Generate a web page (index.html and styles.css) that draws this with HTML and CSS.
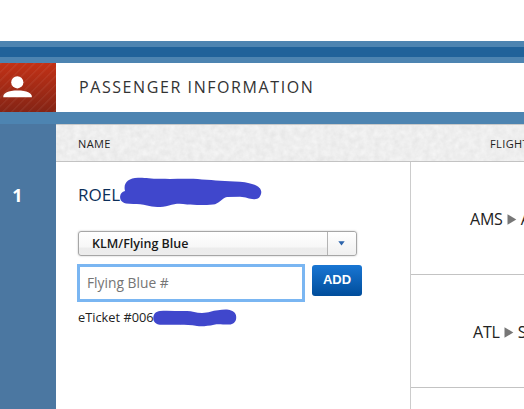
FILE: index.html
```html
<!DOCTYPE html>
<html lang="en">
<head>
    <meta charset="UTF-8">
    <meta name="viewport" content="width=device-width, initial-scale=1.0">
    <title>Passenger Information</title>
    <link rel="stylesheet" href="styles.css">
</head>
<body>
    <div class="top-bar"></div>

    <div class="section-header">
        <div class="section-icon">
            <svg width="30" height="22" viewBox="0 0 30 22">
                <circle cx="14.3" cy="6.3" r="6.1" fill="#fff"/>
                <path d="M0.2 21.2C0.2 17 5 14.6 14.5 14.6S28.9 17 28.9 21.2Z" fill="#fff"/>
            </svg>
        </div>
        <h1>PASSENGER INFORMATION</h1>
    </div>

    <div class="passenger">
        <div class="number">1</div>
        <div class="details">
            <div class="column-titles">
                <!-- paper texture -->
                <svg class="paper" width="468" height="36">
                    <filter id="grain" x="0" y="0" width="100%" height="100%" color-interpolation-filters="sRGB">
                        <feTurbulence type="fractalNoise" baseFrequency="0.16" numOctaves="3" seed="4"/>
                        <feColorMatrix values="0.075 0 0 0 0.895  0.075 0 0 0 0.895  0.075 0 0 0 0.895  0 0 0 0 1"/>
                    </filter>
                    <rect width="468" height="36" filter="url(#grain)"/>
                </svg>
                <span class="title-name">NAME</span>
                <span class="title-flight">FLIGHT</span>
            </div>
            <div class="columns">
                <div class="info">
                    <div class="name">
                        <span>ROEL</span>
                        <svg class="mark mark-name" width="142" height="31" viewBox="0 0 142 31">
                            <path d="M5 14C3 6 8 1 18 .7C25 .4 30 1.8 40 1.8C55 2.3 67 1.3 82 2.4C95 3 105 4.3 120 4.7C133 6 141 9 141.3 15C141 20 138 22.5 134 22.2C129 22 126 20 120 19.7L107 19.9C102 21 99 27 93 27.5C84 28.3 74 28 67 27.5C60 26 55 26.6 49 28.4C41 30.5 33 30.3 27 28.5C20 26 12 27.5 6 26.6C1 25.5 0 22 .1 19.5C.4 16.5 2 14.7 5 14Z"/>
                        </svg>
                    </div>
                    <div class="select">
                        <span class="select-text">KLM/Flying Blue</span>
                        <span class="select-arrow">
                            <svg width="7" height="5" viewBox="0 0 7 5"><path d="M0.3 0.3H6.7L3.5 4.6Z" fill="#2d64ab"/></svg>
                        </span>
                    </div>
                    <div class="add-row">
                        <input type="text" class="number-input" placeholder="Flying Blue #">
                        <button class="add">ADD</button>
                    </div>
                    <div class="ticket">
                        <span>eTicket #006</span>
                        <svg class="mark mark-ticket" width="84" height="18" viewBox="0 0 84 18">
                            <path d="M7 2C16 1.4 26 2.4 34 2C39 2 43 4 49 4C56 4 59 1.5 65 1.3C70 .5 75 .2 78 1.5C82 3 83.5 5.5 83.2 9C83 13 80 15.7 76 15.6C70 15.8 66 14.6 61 15.7C55 17 49 17.6 44 17C38 15.6 32 16 27 15.7H7C2.5 15.3 .2 12.5 .3 9C.4 5 3 2.3 7 2Z"/>
                        </svg>
                    </div>
                </div>
                <div class="flights">
                    <div class="flight flight-first">
                        <span>AMS</span>
                        <svg width="10" height="11" viewBox="0 0 10 11"><path d="M0.5 0.3L9.3 5.5L0.5 10.7Z" fill="#777"/></svg>
                        <span>ATL</span>
                    </div>
                    <div class="flight">
                        <span>ATL</span>
                        <svg width="10" height="11" viewBox="0 0 10 11"><path d="M0.5 0.3L9.3 5.5L0.5 10.7Z" fill="#777"/></svg>
                        <span>SEA</span>
                    </div>
                </div>
            </div>
        </div>
    </div>
</body>
</html>
```
FILE: styles.css
```css
* {
    box-sizing: border-box;
}
body {
    margin: 0;
    padding-top: 41px;
    height: 409px;
    overflow: hidden;
    background-color: #ffffff;
    color: #222;
    font-family: "Open Sans", "Liberation Sans", sans-serif;
}
.top-bar {
    height: 22px;
    background-color: #20629a;
    border-top: 6px solid #4d84b1;
    border-bottom: 6px solid #4d84b1;
}
.section-header {
    display: flex;
    height: 61px;
    border-bottom: 12px solid #4d84b1;
}
.section-icon {
    width: 56px;
    padding: 13px 0 0 3px;
    background: repeating-linear-gradient(135deg, rgba(255, 255, 255, 0.05) 0 1px, transparent 2px 6px), linear-gradient(#c23116, #842415);
}
.section-icon svg {
    display: block;
}
h1 {
    margin: 0 0 0 23px;
    font-size: 16px;
    font-weight: 500;
    line-height: 49px;
    letter-spacing: 1.58px;
    color: #333;
}
.passenger {
    display: flex;
    height: 285px;
}
.number {
    width: 56px;
    padding: 58px 21px 0 0;
    background-color: #4b77a1;
    color: #fff;
    font-size: 18px;
    font-weight: 700;
    line-height: 26px;
    text-align: center;
}
.details {
    width: 468px;
}
.column-titles {
    position: relative;
    display: flex;
    height: 38px;
    border-top: 1px solid #c9c9c9;
    border-bottom: 1px solid #c3c3c3;
    font-size: 11px;
    font-weight: 500;
    line-height: 37px;
    overflow: hidden;
}
.paper {
    position: absolute;
    top: 0;
    left: 0;
}
.title-name,
.title-flight {
    position: relative;
    flex-shrink: 0;
    padding-left: 22px;
    letter-spacing: 0.4px;
}
.title-name {
    width: 354px;
}
.title-flight {
    padding-left: 80px;
}
.columns {
    display: flex;
    height: 247px;
}
.info {
    width: 354px;
    padding: 20px 0 0 22px;
}
.name {
    position: relative;
    height: 49px;
    font-size: 17px;
    line-height: 26px;
    color: #0c2f5a;
}
.mark {
    position: absolute;
    fill: #4047cc;
}
.mark-name {
    left: 42px;
    top: -5px;
}
.select {
    display: flex;
    width: 279px;
    height: 25px;
    border: 1px solid #a6a6a6;
    border-radius: 3px;
    background: linear-gradient(#fff 0, #f7f7f7 65%, #ececec 70%, #ededed 100%);
    box-shadow: 0 0 2px rgba(0, 0, 0, 0.25);
    font-size: 12.5px;
    font-weight: 600;
    line-height: 23px;
    color: #1a1a1a;
}
.select-text {
    flex: 1;
    padding-left: 13px;
}
.select-arrow {
    display: flex;
    align-items: center;
    justify-content: center;
    width: 29px;
    padding-right: 2px;
    border-left: 1px solid #b4b4b4;
    border-radius: 0 3px 3px 0;
    background: linear-gradient(#fff, #f0f0f0);
}
.add-row {
    display: flex;
    gap: 7px;
    margin-top: 8px;
    margin-left: -1px;
}
.number-input {
    width: 228px;
    height: 38px;
    padding: 0 7px 2px;
    border: 3px solid #7ab6f2;
    background-color: #fff;
    font-family: inherit;
    font-size: 13.8px;
    outline: none;
}
.number-input::placeholder {
    color: #757575;
}
.add {
    width: 50px;
    height: 31px;
    margin-top: 1px;
    padding: 0 0 2px;
    border: none;
    border-radius: 3px;
    background: linear-gradient(#1976d3, #004d9b);
    color: #fff;
    font-family: "Liberation Sans", Arial, sans-serif;
    font-size: 13px;
    font-weight: 700;
}
.ticket {
    position: relative;
    margin-top: 5px;
    font-size: 12.8px;
    line-height: 20px;
}
.mark-ticket {
    left: 75px;
    top: 2px;
}
.flights {
    width: 114px;
    border-left: 1px solid #ccc;
}
.flight {
    display: flex;
    align-items: center;
    gap: 4px;
    height: 113px;
    padding: 2px 0 0 62px;
    border-bottom: 1px solid #c3c3c3;
    font-size: 16px;
    letter-spacing: -0.2px;
    white-space: nowrap;
    overflow: hidden;
}
.flight span,
.flight svg {
    flex-shrink: 0;
}
.flight-first {
    padding-left: 59px;
}
```
